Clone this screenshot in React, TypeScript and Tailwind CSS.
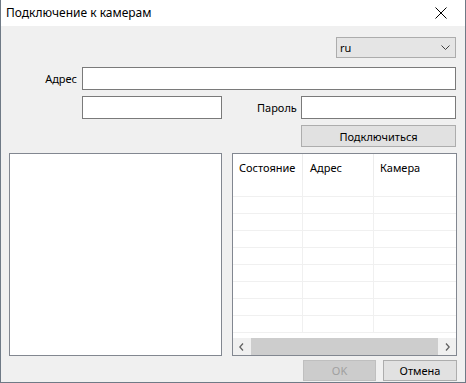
import React from "react";

const font = { fontFamily: '"Noto Sans", "Open Sans", sans-serif' };

export default function App() {
  const rows = [196, 213, 230, 247, 264, 281, 298, 315, 332];
  return (
    <div
      className="w-[466px] h-[383px] overflow-hidden bg-[#f0f0f0] flex flex-col border-l border-r border-b border-[#6f7a86] text-[11px] text-black"
      style={font}
    >
      {/* title bar */}
      <div className="h-[26px] bg-white flex items-center pl-[5px] shrink-0">
        <span className="text-[12px] leading-none">Подключение к камерам</span>
        <div className="ml-auto w-[32px] h-[26px] flex items-center justify-center mr-[8px]">
          <svg width="12" height="12" viewBox="0 0 12 12">
            <path d="M0.5 0.5 L11.5 11.5 M11.5 0.5 L0.5 11.5" stroke="#000" strokeWidth="1" />
          </svg>
        </div>
      </div>

      {/* combo */}
      <div className="flex justify-end pr-[9px] mt-[11px]">
        <div className="w-[120px] h-[21px] bg-[#e5e5e5] border border-[#acacac] flex items-center pl-[3px] pr-[5px]">
          <span className="leading-none">ru</span>
          <svg className="ml-auto" width="9" height="6" viewBox="0 0 9 6">
            <path d="M0.5 0.5 L4.5 4.5 L8.5 0.5" stroke="#404040" fill="none" strokeWidth="1" />
          </svg>
        </div>
      </div>

      {/* address row */}
      <div className="flex items-center mt-[9px] pr-[9px]">
        <div className="w-[76px] text-right leading-none">Адрес</div>
        <div className="ml-[5px] flex-1 h-[23px] bg-white border border-[#7a7a7a]" />
      </div>

      {/* login / password row */}
      <div className="flex items-center mt-[6px] pr-[9px]">
        <div className="ml-[81px] w-[140px] h-[23px] bg-white border border-[#7a7a7a]" />
        <div className="ml-[35px] leading-none whitespace-nowrap">Пароль</div>
        <div className="ml-auto w-[155px] h-[23px] bg-white border border-[#7a7a7a]" />
      </div>

      {/* connect button */}
      <div className="flex justify-end mt-[6px] pr-[9px]">
        <div className="w-[155px] h-[22px] bg-[#e1e1e1] border border-[#adadad] flex items-center justify-center leading-none">
          Подключиться
        </div>
      </div>

      {/* panels */}
      <div className="flex mt-[6px] pl-[8px] pr-[8px] h-[203px]">
        <div className="w-[213px] h-full bg-white border border-[#828790]" />
        <div className="ml-[10px] w-[225px] h-full bg-white border border-[#828790] flex flex-col relative overflow-hidden">
          {/* header */}
          <div className="flex h-[26px] items-center shrink-0">
            <div className="w-[70px] pl-[6px] border-r border-[#ececec] h-full flex items-center leading-none">Состояние</div>
            <div className="w-[71px] pl-[7px] border-r border-[#ececec] h-full flex items-center leading-none">Адрес</div>
            <div className="flex-1 pl-[6px] h-full flex items-center leading-none">Камера</div>
          </div>
          {/* body grid */}
          <div className="flex-1 flex flex-col">
            {rows.map((r) => (
              <div key={r} className="h-[17px] border-b border-[#f0f0f0] flex shrink-0">
                <div className="w-[70px] border-r border-[#f0f0f0]" />
                <div className="w-[71px] border-r border-[#f0f0f0]" />
                <div className="flex-1" />
              </div>
            ))}
          </div>
          {/* scrollbar */}
          <div className="absolute left-0 right-0 bottom-0 h-[17px] bg-[#f0f0f0] flex items-center">
            <div className="w-[17px] h-full flex items-center justify-center">
              <svg width="5" height="8" viewBox="0 0 5 8">
                <path d="M4 0.5 L0.8 4 L4 7.5" stroke="#606060" fill="none" strokeWidth="1.3" />
              </svg>
            </div>
            <div className="flex-1 h-full bg-[#cdcdcd] mx-[1px]" />
            <div className="w-[17px] h-full flex items-center justify-center">
              <svg width="5" height="8" viewBox="0 0 5 8">
                <path d="M1 0.5 L4.2 4 L1 7.5" stroke="#606060" fill="none" strokeWidth="1.3" />
              </svg>
            </div>
          </div>
        </div>
      </div>

      {/* bottom buttons */}
      <div className="flex justify-end gap-[7px] mt-[4px] pr-[8px]">
        <div className="w-[73px] h-[21px] bg-[#cccccc] border border-[#bfbfbf] flex items-center justify-center text-[#a0a0a0] leading-none">
          OK
        </div>
        <div className="w-[74px] h-[21px] bg-[#e1e1e1] border border-[#adadad] flex items-center justify-center leading-none">
          Отмена
        </div>
      </div>
    </div>
  );
}
